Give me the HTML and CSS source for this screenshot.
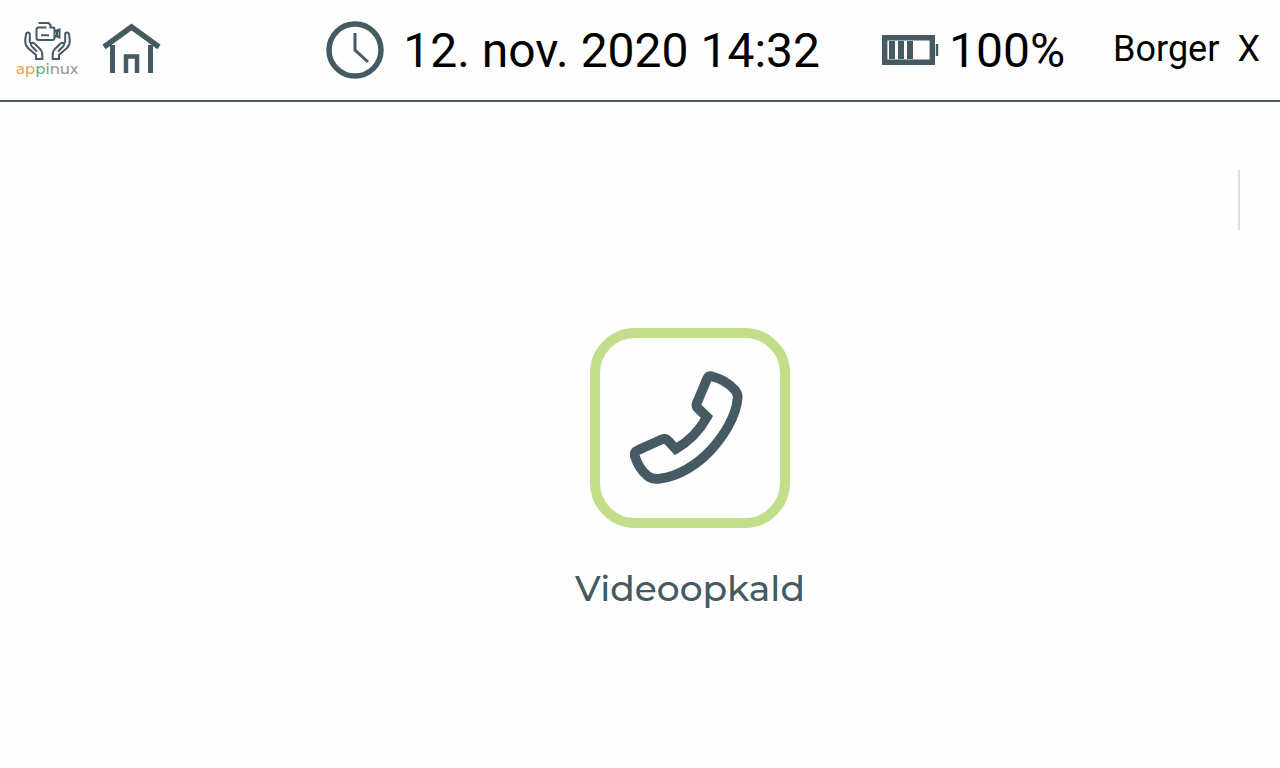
FILE: index.html
```
<!DOCTYPE html>
<html lang="da">
<head>
  <meta charset="UTF-8">
  <meta name="viewport" content="width=device-width, initial-scale=1">
  <title>Appinux</title>
  <link rel="stylesheet" href="styles.css">
</head>
<body>
  <header class="topbar">
    <div class="brand">
      <svg class="brand-mark" viewBox="16 20 62 42" aria-hidden="true">
        <path d="M38.5 23H48.5L50.5 25V27.5H53Q54.5 27.5 54.5 29V38Q54.5 40 52.5 40H38.5Q36.5 40 36.5 38V29.5Q36.5 27.5 38.5 27.5H46.5M41 35.3H49M54.5 31.5L59.5 29.5V37.5L54.5 35.5M57 30.5V36.5"/>
        <path d="M31 43.5L29.8 42V34Q29.8 32.4 28 32.4Q26.2 32.4 26 34.5L25.2 40Q24.8 44.5 28 48L36 55V59H42.3V53.5Q42 51.5 40.5 49.5L34.5 43.5Q32.5 42 31 43.5Q30.2 45 32 46.5L37 51.5"/>
        <path d="M64 43.5L65.2 42V34Q65.2 32.4 67 32.4Q68.8 32.4 69 34.5L69.8 40Q70.2 44.5 67 48L59 55V59H52.7V53.5Q53 51.5 54.5 49.5L60.5 43.5Q62.5 42 64 43.5Q64.8 45 63 46.5L58 51.5"/>
      </svg>
      <span class="brand-name"><span class="orange">ap</span><span class="green">pi</span>nux</span>
    </div>
    <button class="home" type="button" aria-label="Hjem">
      <svg width="60" height="56" viewBox="102 22 60 56">
        <path d="M104 47L131.5 27L159 47" stroke-width="5.5"/>
        <path d="M112.5 45V73M150.5 45V73" stroke-width="5"/>
        <path d="M126 73V56.5H137V73" stroke-width="4.5"/>
      </svg>
    </button>
    <div class="clock">
      <svg width="58" height="58" viewBox="326 21 58 58" aria-hidden="true">
        <circle cx="355" cy="50" r="26" stroke-width="5.5"/>
        <path d="M355 33V50L368 62" stroke-width="3"/>
      </svg>
      <time datetime="2020-11-12T14:32">12. nov. 2020 14:32</time>
    </div>
    <div class="battery">
      <svg width="57" height="30" viewBox="882 35 57 30" aria-hidden="true">
        <path d="M884.7 37.7H932.3V62.3H884.7Z" stroke-width="5.4"/>
        <path d="M892 41V59M901 41V59M910 41V59" stroke-width="6"/>
        <path d="M937 44V56" stroke-width="2.5"/>
      </svg>
      <span>100%</span>
    </div>
    <div class="user">
      <span>Borger</span>
      <button class="logout" type="button">X</button>
    </div>
  </header>

  <main class="content">
    <button class="app" type="button">
      <span class="app-icon">
        <svg width="120" height="120" viewBox="150 150 360 360" aria-hidden="true">
          <path d="M395 175Q386 173 381 183L352 252Q346 264 355 272L381 297Q347 359 287 393L266 370Q257 359 244 365L175 396Q160 402 165 416Q176 452 203 474Q216 485 240 482C294 476 350 441 391 398C433 352 469 293 473 240Q474 227 464 215Q437 185 395 175Z" stroke-width="29"/>
        </svg>
      </span>
      <span class="app-label">Videoopkald</span>
    </button>
    <div class="divider"></div>
  </main>
</body>
</html>
```
FILE: styles.css
```
* { box-sizing: border-box; }
body {
  font-family: Roboto, sans-serif;
  margin: 0;
  min-height: 100vh;
  display: flex;
  flex-direction: column;
  background: #fefefe;
  color: #000;
}
svg {
  display: block;
  flex: none;
  fill: none;
  stroke: #455a62;
}
button {
  background: none;
  border: none;
  padding: 0;
  font: inherit;
  color: inherit;
  cursor: pointer;
}
.topbar {
  display: flex;
  align-items: center;
  height: 102px;
  padding: 0 20px 0 16px;
  border-bottom: 2px solid #455a62;
  white-space: nowrap;
}
.brand {
  width: 62px;
  padding-bottom: 4px;
}
.brand-mark {
  width: 62px;
  height: 42px;
  stroke-width: 2;
}
.brand-name {
  display: block;
  font-family: Montserrat, Inter, sans-serif;
  font-size: 15px;
  font-weight: 500;
  line-height: 14px;
  text-align: center;
  color: #8e9499;
}
.orange { color: #f2a14e; }
.green { color: #62ab8a; }
.home {
  margin-left: 24px;
}
.clock {
  display: flex;
  align-items: center;
  gap: 19px;
  margin-left: auto;
  font-size: 48px;
}
.battery {
  display: flex;
  align-items: center;
  gap: 10px;
  margin-left: 62px;
  font-size: 48px;
}
.user {
  display: flex;
  gap: 18px;
  margin-left: 48px;
  padding-bottom: 2px;
  font-size: 36px;
}
.content {
  flex: 1;
  display: grid;
  grid-template-columns: 142px 1fr 42px;
  padding-top: 68px;
}
.app {
  grid-column: 2;
  justify-self: center;
  align-self: start;
  display: flex;
  flex-direction: column;
  align-items: center;
  gap: 36px;
  margin-top: 158px;
  color: #455a62;
}
.app-icon {
  display: flex;
  align-items: center;
  justify-content: center;
  width: 200px;
  height: 200px;
  border: 10px solid #c2de8b;
  border-radius: 45px;
}
.app-label {
  font-family: Montserrat, Inter, sans-serif;
  font-size: 36px;
  font-weight: 500;
  line-height: 48px;
}
.divider {
  width: 2px;
  height: 60px;
  background: #e0e0e0;
}
```
